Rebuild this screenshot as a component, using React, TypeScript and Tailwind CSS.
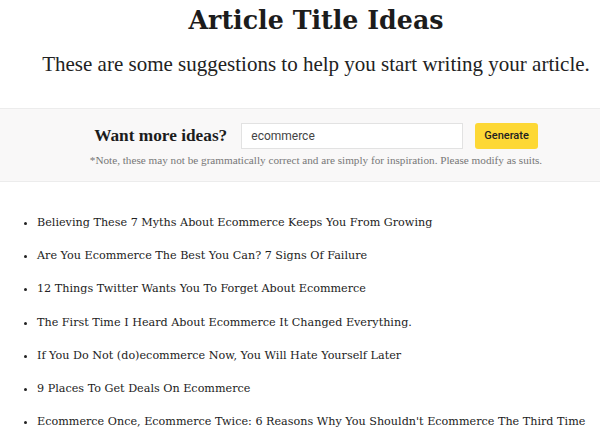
import React from "react";

const items = [
  "Believing These 7 Myths About Ecommerce Keeps You From Growing",
  "Are You Ecommerce The Best You Can? 7 Signs Of Failure",
  "12 Things Twitter Wants You To Forget About Ecommerce",
  "The First Time I Heard About Ecommerce It Changed Everything.",
  "If You Do Not (do)ecommerce Now, You Will Hate Yourself Later",
  "9 Places To Get Deals On Ecommerce",
  "Ecommerce Once, Ecommerce Twice: 6 Reasons Why You Shouldn't Ecommerce The Third Time",
];

export default function App() {
  return (
    <div className="w-[600px] h-[437px] overflow-hidden bg-white text-[#222]">
      <div className="flex flex-col items-center pl-[32px]">
        <h1 className="mt-[3px] text-[25.3px] leading-[34px] font-bold text-[#1c1c1c] [font-family:'DejaVu_Serif',serif]">
          Article Title Ideas
        </h1>
        <p className="mt-[14px] text-[21px] leading-[26px] text-[#222] [font-family:'Liberation_Serif',serif] whitespace-nowrap">
          These are some suggestions to help you start writing your article.
        </p>
      </div>
      <div className="mt-[31px] h-[74px] bg-[#f9f8f8] border-y border-[#ececec] flex flex-col items-center pt-[14px] pl-[32px]">
        <div className="flex items-center">
          <span className="text-[17.3px] font-bold text-[#1c1c1c] [font-family:'Liberation_Serif',serif] mr-[14px]">
            Want more ideas?
          </span>
          <input
            readOnly
            value="ecommerce"
            className="w-[222px] h-[26px] border border-[#e2e2e2] bg-white px-[9px] text-[12px] text-[#444] [font-family:Roboto,sans-serif] outline-none"
          />
          <button className="ml-[12px] h-[26px] px-[9px] rounded-[3px] bg-[#fdd835] text-[11px] font-medium text-[#222] [font-family:Roboto,sans-serif]">
            Generate
          </button>
        </div>
        <p className="mt-[3px] text-[11.2px] text-[#777] [font-family:'Liberation_Serif',serif] whitespace-nowrap">
          *Note, these may not be grammatically correct and are simply for inspiration. Please modify as suits.
        </p>
      </div>
      <ul className="mt-[33px] pl-[37px] list-disc text-[11.2px] leading-[16px] text-[#222] [font-family:'DejaVu_Serif',serif] flex flex-col gap-[17.2px]">
        {items.map((t) => (
          <li key={t} className="whitespace-nowrap">{t}</li>
        ))}
      </ul>
    </div>
  );
}
